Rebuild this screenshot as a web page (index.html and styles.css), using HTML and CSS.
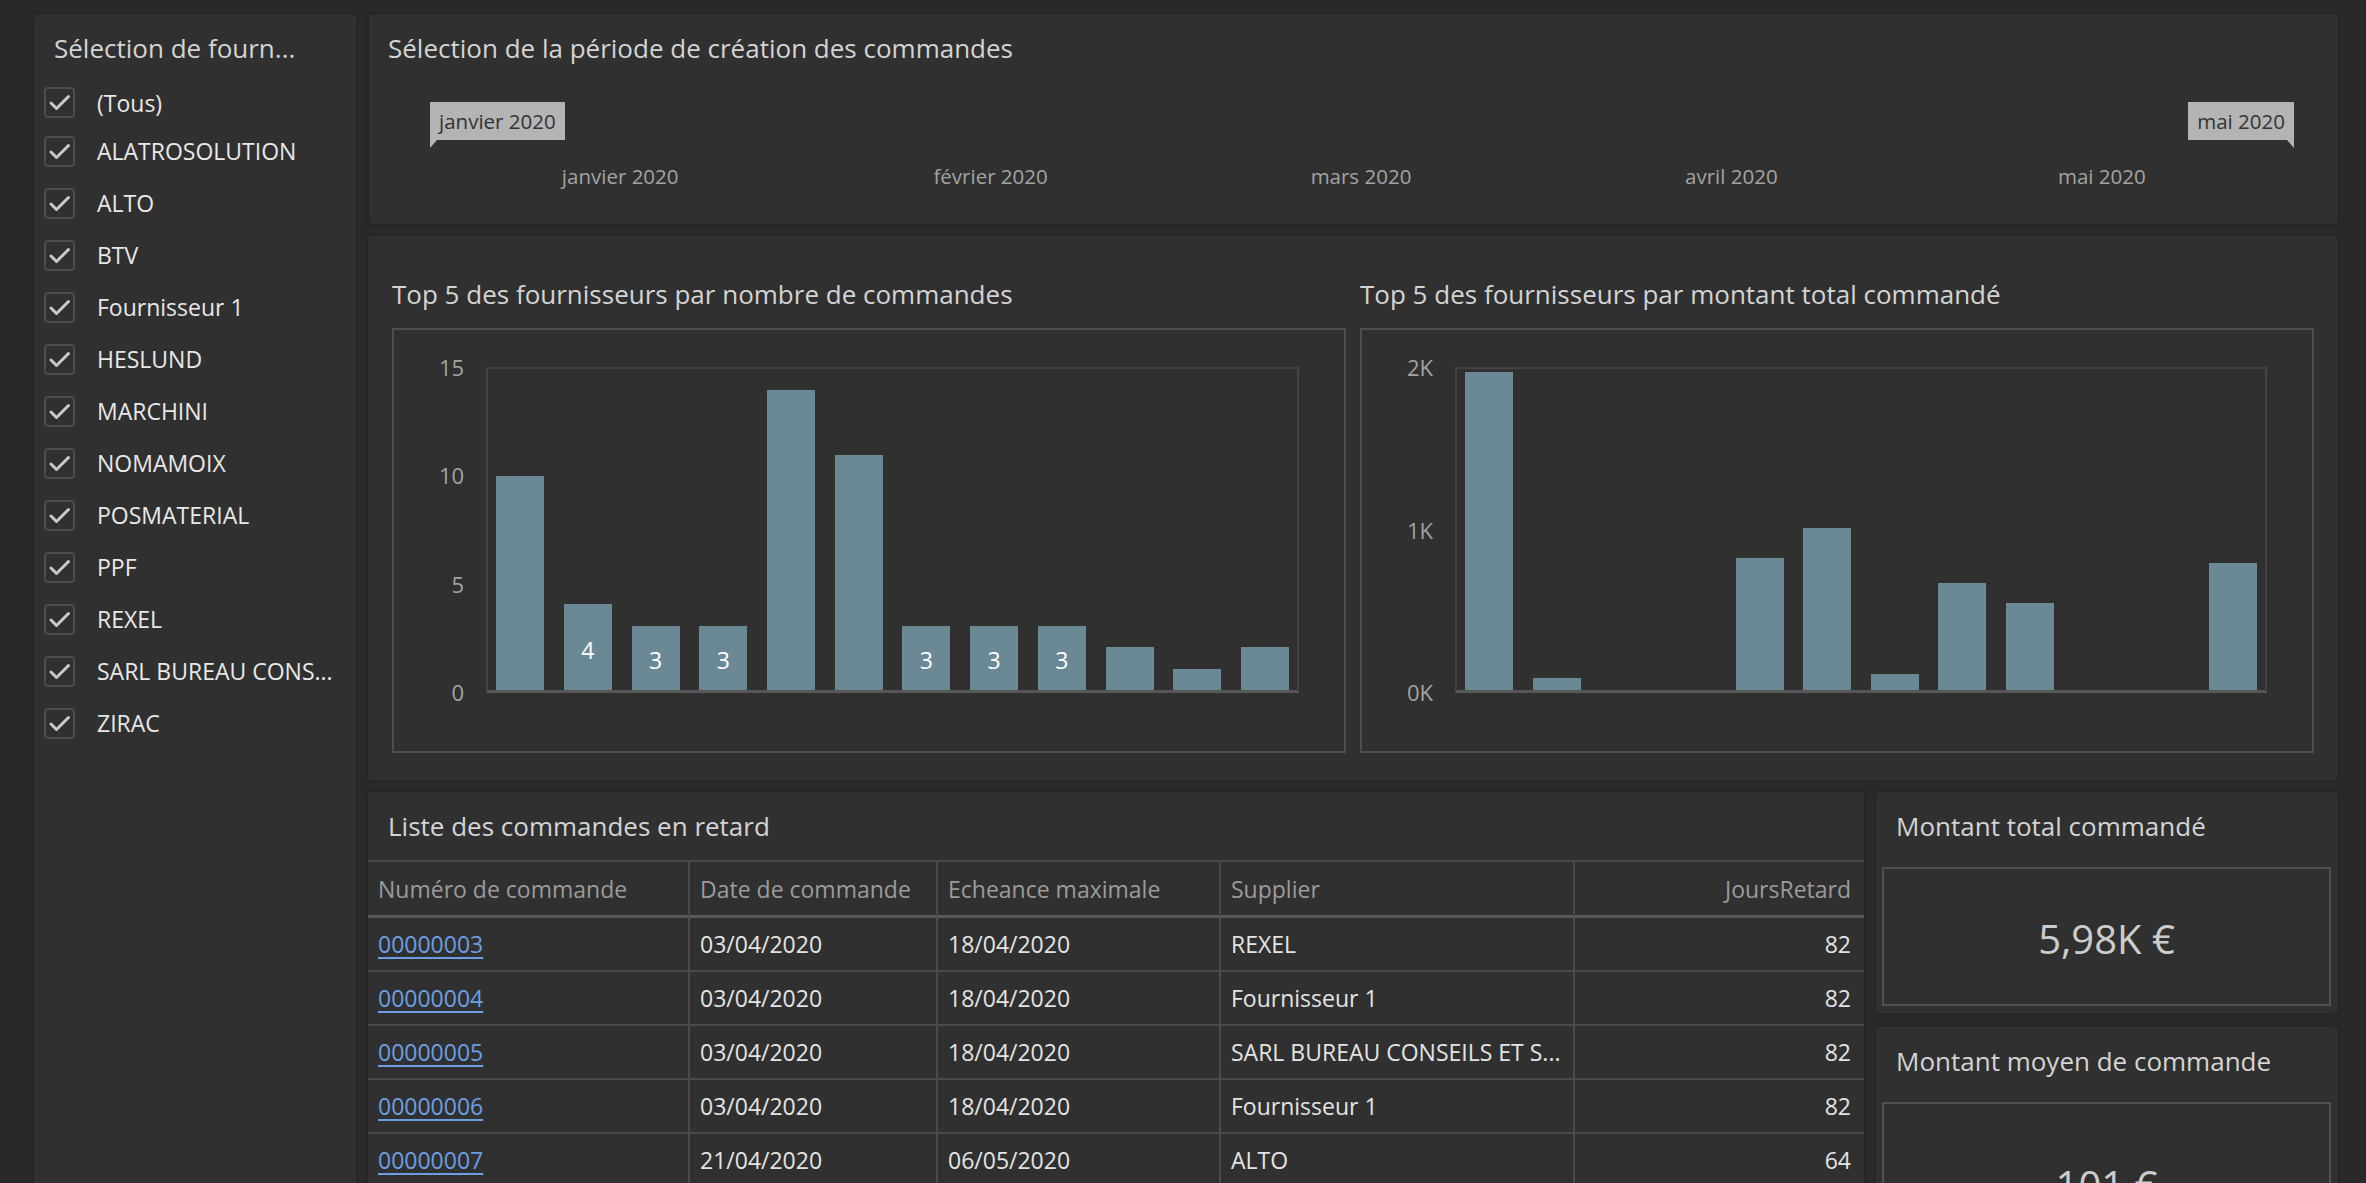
FILE: index.html
```html
<!DOCTYPE html>
<html lang="fr">
<head>
<meta charset="utf-8">
<title>Tableau de bord fournisseurs</title>
<link rel="stylesheet" href="styles.css">
</head>
<body>
<div class="page">
  <aside class="panel slicer">
    <h2 class="panel-title">Sélection de fourn...</h2>
    <ul class="slicer-list">
      <li class="item item-all"><span class="cb"><svg viewBox="0 0 31 31" width="31" height="31"><path d="M7 16 L12.5 21.5 L24.5 9.5" /></svg></span><span class="lbl">(Tous)</span></li>
      <li class="item"><span class="cb"><svg viewBox="0 0 31 31" width="31" height="31"><path d="M7 16 L12.5 21.5 L24.5 9.5" /></svg></span><span class="lbl">ALATROSOLUTION</span></li>
      <li class="item"><span class="cb"><svg viewBox="0 0 31 31" width="31" height="31"><path d="M7 16 L12.5 21.5 L24.5 9.5" /></svg></span><span class="lbl">ALTO</span></li>
      <li class="item"><span class="cb"><svg viewBox="0 0 31 31" width="31" height="31"><path d="M7 16 L12.5 21.5 L24.5 9.5" /></svg></span><span class="lbl">BTV</span></li>
      <li class="item"><span class="cb"><svg viewBox="0 0 31 31" width="31" height="31"><path d="M7 16 L12.5 21.5 L24.5 9.5" /></svg></span><span class="lbl">Fournisseur 1</span></li>
      <li class="item"><span class="cb"><svg viewBox="0 0 31 31" width="31" height="31"><path d="M7 16 L12.5 21.5 L24.5 9.5" /></svg></span><span class="lbl">HESLUND</span></li>
      <li class="item"><span class="cb"><svg viewBox="0 0 31 31" width="31" height="31"><path d="M7 16 L12.5 21.5 L24.5 9.5" /></svg></span><span class="lbl">MARCHINI</span></li>
      <li class="item"><span class="cb"><svg viewBox="0 0 31 31" width="31" height="31"><path d="M7 16 L12.5 21.5 L24.5 9.5" /></svg></span><span class="lbl">NOMAMOIX</span></li>
      <li class="item"><span class="cb"><svg viewBox="0 0 31 31" width="31" height="31"><path d="M7 16 L12.5 21.5 L24.5 9.5" /></svg></span><span class="lbl">POSMATERIAL</span></li>
      <li class="item"><span class="cb"><svg viewBox="0 0 31 31" width="31" height="31"><path d="M7 16 L12.5 21.5 L24.5 9.5" /></svg></span><span class="lbl">PPF</span></li>
      <li class="item"><span class="cb"><svg viewBox="0 0 31 31" width="31" height="31"><path d="M7 16 L12.5 21.5 L24.5 9.5" /></svg></span><span class="lbl">REXEL</span></li>
      <li class="item"><span class="cb"><svg viewBox="0 0 31 31" width="31" height="31"><path d="M7 16 L12.5 21.5 L24.5 9.5" /></svg></span><span class="lbl">SARL BUREAU CONS...</span></li>
      <li class="item"><span class="cb"><svg viewBox="0 0 31 31" width="31" height="31"><path d="M7 16 L12.5 21.5 L24.5 9.5" /></svg></span><span class="lbl">ZIRAC</span></li>
    </ul>
  </aside>

  <main class="right">
    <section class="panel period">
      <h2 class="panel-title">Sélection de la période de création des commandes</h2>
      <div class="slider">
        <div class="handles">
          <span class="tip tip-left">janvier 2020</span>
          <span class="tip tip-right">mai 2020</span>
        </div>
        <div class="ticks">
          <span>janvier 2020</span>
          <span>février 2020</span>
          <span>mars 2020</span>
          <span>avril 2020</span>
          <span>mai 2020</span>
        </div>
      </div>
    </section>

    <section class="panel charts">
      <div class="chart">
        <h3 class="chart-title">Top 5 des fournisseurs par nombre de commandes</h3>
        <div class="chart-box">
          <div class="y-axis"><span>15</span><span>10</span><span>5</span><span>0</span></div>
          <div class="plot">
            <div class="bar" style="height:66.67%"></div>
            <div class="bar" style="height:26.67%"><span class="val">4</span></div>
            <div class="bar" style="height:20%"><span class="val">3</span></div>
            <div class="bar" style="height:20%"><span class="val">3</span></div>
            <div class="bar" style="height:93.33%"></div>
            <div class="bar" style="height:73.33%"></div>
            <div class="bar" style="height:20%"><span class="val">3</span></div>
            <div class="bar" style="height:20%"><span class="val">3</span></div>
            <div class="bar" style="height:20%"><span class="val">3</span></div>
            <div class="bar" style="height:13.33%"></div>
            <div class="bar" style="height:6.67%"></div>
            <div class="bar" style="height:13.33%"></div>
          </div>
        </div>
      </div>
      <div class="chart">
        <h3 class="chart-title">Top 5 des fournisseurs par montant total commandé</h3>
        <div class="chart-box">
          <div class="y-axis"><span>2K</span><span>1K</span><span>0K</span></div>
          <div class="plot">
            <div class="bar" style="height:99%"></div>
            <div class="bar" style="height:3.7%"></div>
            <div class="bar" style="height:0%"></div>
            <div class="bar" style="height:0%"></div>
            <div class="bar" style="height:41.2%"></div>
            <div class="bar" style="height:50.5%"></div>
            <div class="bar" style="height:5%"></div>
            <div class="bar" style="height:33.2%"></div>
            <div class="bar" style="height:27%"></div>
            <div class="bar" style="height:0%"></div>
            <div class="bar" style="height:0%"></div>
            <div class="bar" style="height:39.5%"></div>
          </div>
        </div>
      </div>
    </section>

    <div class="bottom">
      <section class="panel table-panel">
        <h2 class="panel-title">Liste des commandes en retard</h2>
        <table class="orders">
          <colgroup>
            <col class="c1"><col class="c2"><col class="c3"><col class="c4"><col class="c5">
          </colgroup>
          <thead>
            <tr>
              <th>Numéro de commande</th>
              <th>Date de commande</th>
              <th>Echeance maximale</th>
              <th>Supplier</th>
              <th class="num">JoursRetard</th>
            </tr>
          </thead>
          <tbody>
            <tr><td><a href="#">00000003</a></td><td>03/04/2020</td><td>18/04/2020</td><td>REXEL</td><td class="num">82</td></tr>
            <tr><td><a href="#">00000004</a></td><td>03/04/2020</td><td>18/04/2020</td><td>Fournisseur 1</td><td class="num">82</td></tr>
            <tr><td><a href="#">00000005</a></td><td>03/04/2020</td><td>18/04/2020</td><td>SARL BUREAU CONSEILS ET S...</td><td class="num">82</td></tr>
            <tr><td><a href="#">00000006</a></td><td>03/04/2020</td><td>18/04/2020</td><td>Fournisseur 1</td><td class="num">82</td></tr>
            <tr><td><a href="#">00000007</a></td><td>21/04/2020</td><td>06/05/2020</td><td>ALTO</td><td class="num">64</td></tr>
          </tbody>
        </table>
      </section>

      <div class="cards">
        <section class="panel card">
          <h2 class="panel-title card-title">Montant total commandé</h2>
          <div class="card-box"><span class="card-value">5,98K €</span></div>
        </section>
        <section class="panel card">
          <h2 class="panel-title card-title">Montant moyen de commande</h2>
          <div class="card-box card-box-tall"><span class="card-value">101 €</span></div>
        </section>
      </div>
    </div>
  </main>
</div>
</body>
</html>
```
FILE: styles.css
```css
* { box-sizing: border-box; }

html, body {
  margin: 0;
  padding: 0;
}

body {
  width: 2366px;
  height: 1183px;
  overflow: hidden;
  background: #292929;
  font-family: "Open Sans", "Noto Sans", "DejaVu Sans", sans-serif;
  color: #d6d6d6;
}

.page {
  display: grid;
  grid-template-columns: 322px 1970px;
  column-gap: 12px;
  padding: 14px 28px 0 34px;
  height: 1183px;
  overflow: hidden;
}

.panel {
  background: #303030;
  border-radius: 4px;
  box-shadow: 0 0 3px rgba(0, 0, 0, 0.25);
}

.panel-title {
  margin: 0;
  font-size: 26px;
  line-height: 31px;
  font-weight: 400;
  color: #d4d4d4;
  white-space: nowrap;
}

/* ---------- Slicer ---------- */
.slicer {
  height: 1250px;
  padding: 19px 0 0 0;
}

.slicer .panel-title {
  padding-left: 20px;
}

.slicer-list {
  list-style: none;
  margin: 16px 0 0 0;
  padding: 0 0 0 10px;
}

.item {
  display: flex;
  align-items: center;
  height: 52px;
}

.item-all {
  height: 45px;
}

.cb {
  width: 31px;
  height: 31px;
  border: 2px solid #4c4c4c;
  border-radius: 4px;
  display: flex;
  align-items: center;
  justify-content: center;
  flex: none;
}

.cb svg {
  display: block;
  margin: -2px;
}

.cb path {
  fill: none;
  stroke: #c9c9c9;
  stroke-width: 3;
  stroke-linecap: round;
  stroke-linejoin: round;
}

.lbl {
  margin-left: 22px;
  font-size: 23px;
  line-height: 30px;
  color: #e8e8e8;
  white-space: nowrap;
}

/* ---------- Right column ---------- */
.right {
  display: flex;
  flex-direction: column;
  gap: 12px;
  min-width: 0;
}

/* ---------- Period slicer ---------- */
.period {
  height: 210px;
  padding: 19px 44px 0 0;
  margin-left: 1px;
}

.period .panel-title {
  padding-left: 19px;
}

.slider {
  padding-left: 61px;
  margin-top: 38px;
}

.handles {
  display: flex;
  justify-content: space-between;
  height: 38px;
}

.tip {
  position: relative;
  background: #b4b4b4;
  color: #333333;
  font-size: 20.5px;
  line-height: 38px;
  height: 38px;
  padding: 0 9px;
  white-space: nowrap;
}

.tip::after {
  content: "";
  position: absolute;
  top: 100%;
  width: 0;
  height: 0;
  border-top: 8px solid #b4b4b4;
}

.tip-left::after {
  left: 0;
  border-right: 7px solid transparent;
}

.tip-right::after {
  right: 0;
  border-left: 7px solid transparent;
}

.ticks {
  display: grid;
  grid-template-columns: repeat(5, 1fr);
  margin: 21px 7px 0 5px;
}

.ticks span {
  text-align: center;
  font-size: 20.5px;
  line-height: 30px;
  color: #a3a3a3;
  white-space: nowrap;
}

/* ---------- Charts ---------- */
.charts {
  height: 544px;
  display: grid;
  grid-template-columns: 1fr 1fr;
  column-gap: 14px;
  padding: 43px 24px 0 24px;
}

.chart {
  min-width: 0;
}

.chart-title {
  margin: 0;
  font-size: 26px;
  line-height: 31px;
  font-weight: 400;
  color: #d4d4d4;
  white-space: nowrap;
}

.chart-box {
  margin-top: 18px;
  height: 425px;
  border: 2px solid #4e4e4e;
  display: flex;
  gap: 22px;
  padding: 37px 45px 58px 45px;
}

.y-axis {
  display: flex;
  flex-direction: column;
  justify-content: space-between;
  padding-bottom: 1px;
}

.y-axis span {
  display: block;
  height: 0;
  line-height: 0;
  font-size: 22px;
  color: #a3a3a3;
  text-align: right;
  white-space: nowrap;
}

.plot {
  flex: 1;
  display: flex;
  align-items: flex-end;
  justify-content: space-between;
  padding: 0 8px;
  border: 2px solid #444444;
  border-bottom: 3px solid #575757;
}

.bar {
  width: 48px;
  background: #6a8995;
  display: flex;
  align-items: center;
  justify-content: center;
  overflow: visible;
}

.val {
  color: #ffffff;
  font-size: 23px;
  line-height: 1;
  margin-top: 6px;
}

/* ---------- Bottom row ---------- */
.bottom {
  display: grid;
  grid-template-columns: 1496px 462px;
  column-gap: 12px;
  align-items: start;
}

.table-panel {
  height: 520px;
  padding-top: 19px;
}

.table-panel .panel-title {
  padding-left: 20px;
  margin-bottom: 18px;
}

.orders {
  width: 1496px;
  table-layout: fixed;
  border-collapse: separate;
  border-spacing: 0;
  font-size: 23px;
}

.orders col.c1 { width: 320px; }
.orders col.c2 { width: 248px; }
.orders col.c3 { width: 283px; }
.orders col.c4 { width: 354px; }
.orders col.c5 { width: 291px; }

.orders th {
  height: 58px;
  border-top: 2px solid #4a4a4a;
  border-bottom: 3px solid #585858;
  font-weight: 400;
  color: #9b9b9b;
  text-align: left;
  padding: 0 10px;
  vertical-align: middle;
  white-space: nowrap;
  overflow: hidden;
}

.orders td {
  height: 54px;
  border-bottom: 2px solid #4a4a4a;
  color: #e4e4e4;
  padding: 0 10px;
  vertical-align: middle;
  white-space: nowrap;
  overflow: hidden;
}

.orders th + th,
.orders td + td {
  border-left: 2px solid #4a4a4a;
}

.orders .num {
  text-align: right;
  padding-right: 13px;
}

.orders a {
  color: #6c9fe2;
  text-decoration: underline;
  text-underline-offset: 4px;
}

/* ---------- Cards ---------- */
.cards {
  display: flex;
  flex-direction: column;
  gap: 14px;
}

.card {
  padding: 19px 7px 7px 6px;
}

.card-title {
  padding-left: 14px;
  margin-bottom: 25px;
}

.card-box {
  height: 139px;
  border: 2px solid #505050;
  display: flex;
  align-items: center;
  justify-content: center;
  padding-top: 4px;
}

.card-box-tall {
  height: 160px;
}

.card-value {
  font-size: 40px;
  color: #cccccc;
  white-space: nowrap;
}
```
